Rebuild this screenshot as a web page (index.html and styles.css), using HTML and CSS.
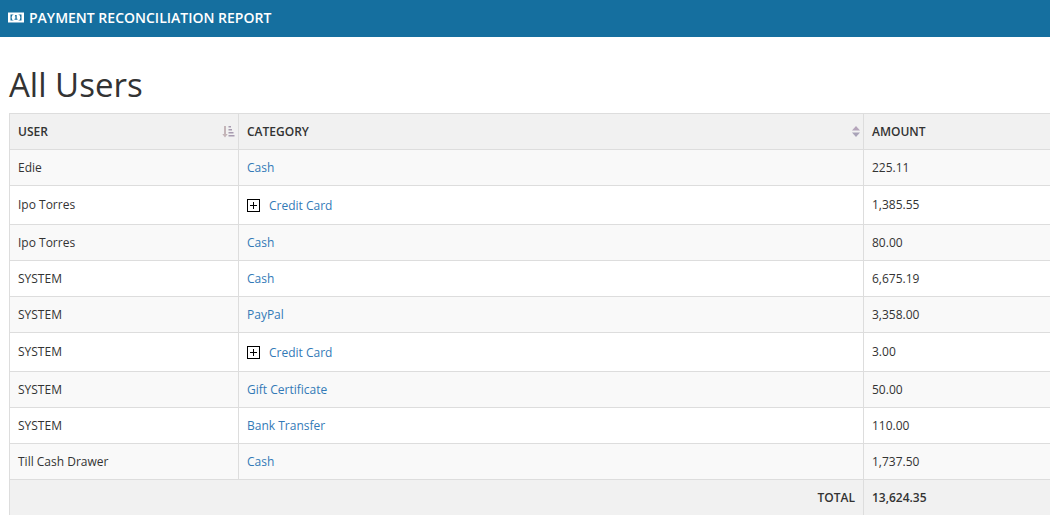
FILE: index.html
```html
<!DOCTYPE html>
<html lang="en">
<head>
<meta charset="utf-8">
<title>Payment Reconciliation Report</title>
<link rel="stylesheet" href="styles.css">
</head>
<body>
<header class="topbar">
  <svg class="money" width="16" height="11" viewBox="0 0 16 11" aria-hidden="true">
    <path fill="#fff" d="M0 .5h16v10H0z"/>
    <path fill="#156f9f" d="M2.500 2.500h11v6h-11z"/>
    <ellipse cx="8" cy="5.500" rx="4.300" ry="3.800" fill="#fff"/>
    <path fill="#156f9f" d="M7.300 3h1.400v3.800h.8v1H6.500v-1h.9V4.200h-.7z"/>
  </svg>
  <span class="topbar-title">PAYMENT RECONCILIATION REPORT</span>
</header>
<main class="content">
  <h1 class="page-title">All Users</h1>
  <table class="report">
    <colgroup><col class="col-user"><col class="col-cat"><col class="col-amt"></colgroup>
    <thead>
      <tr>
        <th><div class="th-inner"><span>USER</span>
          <svg class="sort" width="13" height="13" viewBox="0 0 13 13" aria-hidden="true">
            <path fill="#c4b5b8" d="M2 1h2v8h1.700L3 12.500.3 9H2z"/>
            <path fill="#a79bb0" d="M6.500 1h2.500v1.500H6.500zM6.500 4h3.500v1.500H6.500zM6.500 7h5v1.500h-5zM6.500 10h6v1.500h-6z"/>
          </svg></div></th>
        <th><div class="th-inner"><span>CATEGORY</span>
          <svg class="sort" width="8" height="11" viewBox="0 0 8 11" aria-hidden="true">
            <path fill="#b5a5bb" d="M4 0l4 4.500H0z"/>
            <path fill="#a9a3b8" d="M0 6.500h8L4 11z"/>
          </svg></div></th>
        <th>AMOUNT</th>
      </tr>
    </thead>
    <tbody>
      <tr class="odd"><td>Edie</td><td><a href="#">Cash</a></td><td>225.11</td></tr>
      <tr class="tall"><td>Ipo Torres</td><td><span class="expand"></span><a class="exp-link" href="#">Credit Card</a></td><td>1,385.55</td></tr>
      <tr class="odd"><td>Ipo Torres</td><td><a href="#">Cash</a></td><td>80.00</td></tr>
      <tr><td>SYSTEM</td><td><a href="#">Cash</a></td><td>6,675.19</td></tr>
      <tr class="odd"><td>SYSTEM</td><td><a href="#">PayPal</a></td><td>3,358.00</td></tr>
      <tr class="tall"><td>SYSTEM</td><td><span class="expand"></span><a class="exp-link" href="#">Credit Card</a></td><td>3.00</td></tr>
      <tr class="odd"><td>SYSTEM</td><td><a href="#">Gift Certificate</a></td><td>50.00</td></tr>
      <tr><td>SYSTEM</td><td><a href="#">Bank Transfer</a></td><td>110.00</td></tr>
      <tr class="odd"><td>Till Cash Drawer</td><td><a href="#">Cash</a></td><td>1,737.50</td></tr>
    </tbody>
    <tfoot>
      <tr><td class="total-label" colspan="2">TOTAL</td><td class="total-value">13,624.35</td></tr>
    </tfoot>
  </table>
</main>
</body>
</html>
```
FILE: styles.css
```css
html, body {
  margin: 0;
  padding: 0;
  height: 515px;
  overflow: hidden;
  background: #fff;
  font-family: "Open Sans", sans-serif;
  color: #333;
}
.topbar {
  height: 37px;
  box-sizing: border-box;
  padding: 0 0 2px 8px;
  background: #156f9f;
  color: #fff;
  display: flex;
  align-items: center;
  gap: 5px;
}
.money { flex: none; }
.topbar-title {
  font-size: 14px;
  font-weight: 600;
}
.content {
  padding: 0 0 0 9px;
}
.page-title {
  margin: 0;
  padding-top: 27px;
  height: 49px;
  line-height: 42px;
  font-size: 33px;
  font-weight: 400;
  color: #333;
}
.report {
  border-collapse: collapse;
  table-layout: fixed;
  width: 1100px;
  font-size: 12px;
  line-height: 19px;
}
.col-user { width: 229px; }
.col-cat { width: 625px; }
.report th, .report td {
  border: 1px solid #ddd;
  padding: 8px;
  text-align: left;
  vertical-align: middle;
}
.report th {
  font-weight: 600;
  background: #f1f1f1;
  color: #333;
}
.th-inner {
  display: flex;
  align-items: center;
  justify-content: space-between;
}
.sort { margin-right: -5px; }
.odd td { background: #f9f9f9; }
.tall td { height: 22px; }
.tall td:first-child, .tall td:last-child {
  vertical-align: top;
  padding-top: 9px;
  padding-bottom: 7px;
}
.report a {
  color: #337ab7;
  text-decoration: none;
}
.expand {
  display: inline-block;
  vertical-align: middle;
  box-sizing: border-box;
  width: 13px;
  height: 13px;
  border: 1px solid #000;
  background:
    linear-gradient(#000, #000) center / 7px 1px no-repeat,
    linear-gradient(#000, #000) center / 1px 7px no-repeat,
    #fff;
}
.exp-link { margin-left: 9px; vertical-align: middle; }
.report tfoot td { background: #f1f1f1; font-weight: 600; }
.report .total-label { text-align: right; }
```
